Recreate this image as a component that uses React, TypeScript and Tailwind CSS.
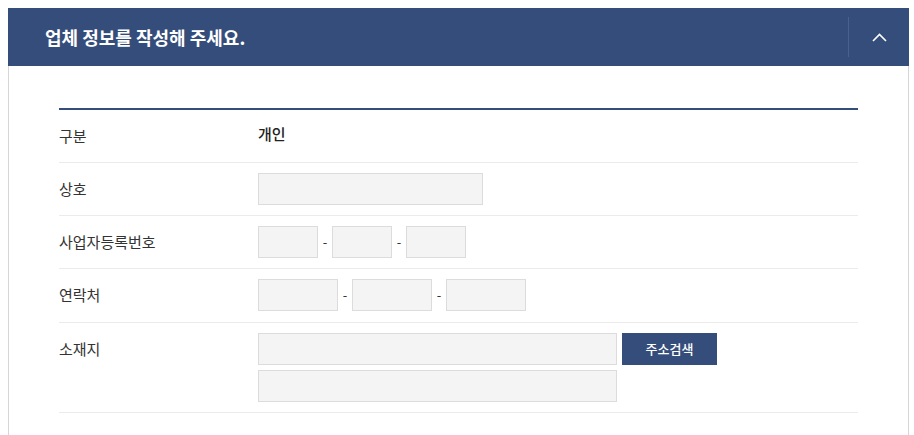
import React from "react";

const font = { fontFamily: '"Noto Sans CJK KR", "Noto Sans", sans-serif' };

function Box({ w }: { w: string }) {
  return <div className={`${w} h-8 bg-[#f4f4f4] border border-[#dcdcdc]`} />;
}

function Dash() {
  return <span className="w-[14px] text-center text-[13px] text-[#333] leading-8">-</span>;
}

function Row({ label, children, pad = "py-[10px]" }: { label: string; children: React.ReactNode; pad?: string }) {
  return (
    <div className={`grid grid-cols-[199px_1fr] ${pad} border-b border-[#ebebeb]`}>
      <div className="h-8 flex items-center text-[15px] text-[#333]">{label}</div>
      <div>{children}</div>
    </div>
  );
}

export default function App() {
  return (
    <div className="bg-white w-[914px] h-[435px] overflow-hidden pt-2 pl-2 pr-[5px]" style={font}>
      <div className="w-[901px]">
        <div className="h-[58px] bg-[#344d7b] flex items-center">
          <div className="flex-1 pl-[37px] text-white text-[18px] font-bold">
            업체 정보를 작성해 주세요.
          </div>
          <div className="w-px h-10 bg-[#4a6190]" />
          <div className="w-[60px] flex items-center justify-center">
            <svg width="15" height="9" viewBox="0 0 15 9" fill="none">
              <path d="M1 8L7.5 1.5L14 8" stroke="white" strokeWidth="1.6" />
            </svg>
          </div>
        </div>
        <div className="border-x border-[#d6d6d6] px-[50px] pt-[42px] h-[400px]">
          <div className="border-t-2 border-[#344d7b]">
            <div className="grid grid-cols-[199px_1fr] py-[10px] border-b border-[#ebebeb]">
              <div className="h-8 flex items-center text-[15px] text-[#333]">구분</div>
              <div className="h-8 leading-[28px] text-[15px] text-[#222] font-medium">개인</div>
            </div>
            <Row label="상호">
              <Box w="w-[225px]" />
            </Row>
            <Row label="사업자등록번호">
              <div className="flex">
                <Box w="w-[60px]" />
                <Dash />
                <Box w="w-[60px]" />
                <Dash />
                <Box w="w-[60px]" />
              </div>
            </Row>
            <Row label="연락처" pad="pt-[10px] pb-[11px]">
              <div className="flex">
                <Box w="w-[80px]" />
                <Dash />
                <Box w="w-[80px]" />
                <Dash />
                <Box w="w-[80px]" />
              </div>
            </Row>
            <Row label="소재지">
              <div className="flex flex-col gap-[5px]">
                <div className="flex gap-[5px]">
                  <Box w="w-[359px]" />
                  <button className="w-[95px] h-8 bg-[#344d7b] text-white text-[13px] font-medium">
                    주소검색
                  </button>
                </div>
                <Box w="w-[359px]" />
              </div>
            </Row>
          </div>
        </div>
      </div>
    </div>
  );
}
